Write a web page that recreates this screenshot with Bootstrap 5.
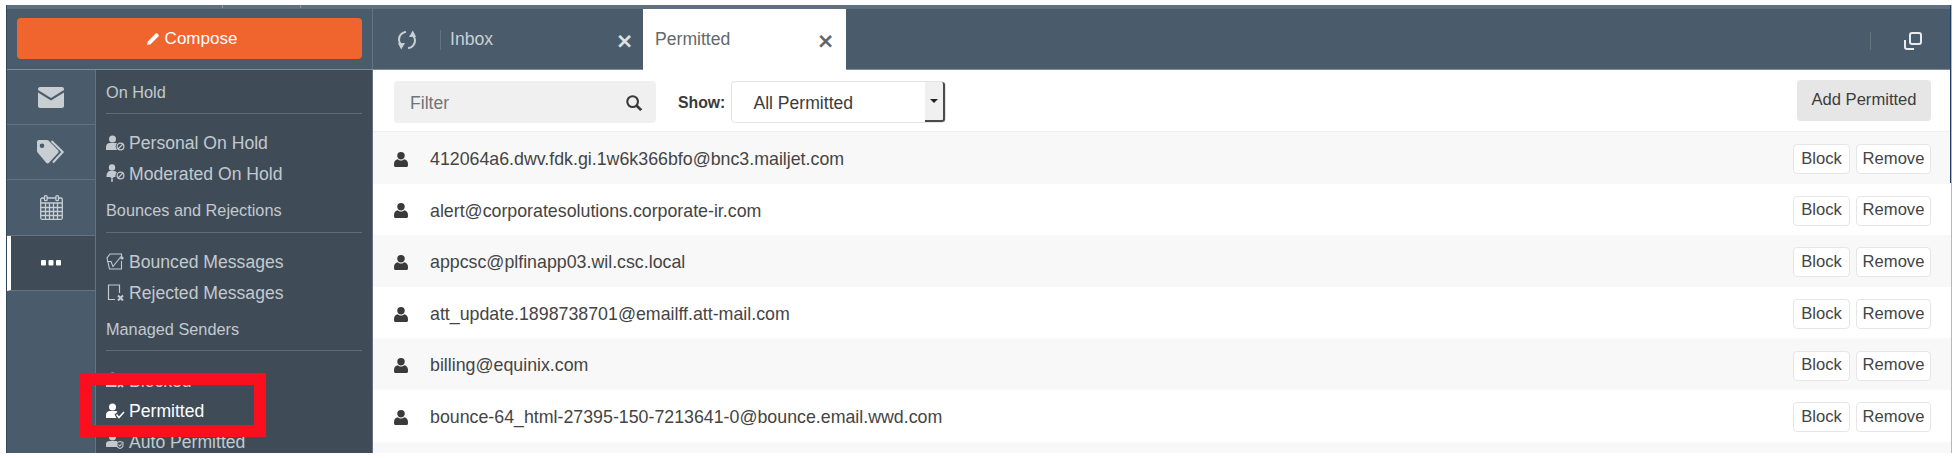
<!DOCTYPE html>
<html lang="en">
<head>
<meta charset="utf-8">
<title>Permitted</title>
<link href="https://cdn.jsdelivr.net/npm/bootstrap@5.3.0/dist/css/bootstrap.min.css" rel="stylesheet">
<style>
html,body{height:458px;overflow:hidden;background:#fff}
body{font-family:"Liberation Sans",Arial,sans-serif;color:#3c3c3c}
.frame{position:relative;margin:5px 6px 0 6px;width:1946px;height:448px;border-left:1px solid #33475f;border-right:1px solid #b5b8ba;overflow:hidden;display:flex;flex-direction:column;background:#fff}
.frame::after{content:"";position:absolute;right:-1px;top:0;width:2px;height:178px;background:#1f3a63;z-index:2}
.topstrip{height:4px;background:#5f7080;flex:none;display:flex}
.topnotch{width:1px;height:3px;background:#8b98a3}
.topnotch.one{margin-left:215px}
.topnotch.two{margin-left:77px}
.head{height:61px;flex:none;background:#4a5c6c;border-bottom:1px solid #7d8c98}
.composezone{width:366px;flex:none;padding:9px 10px 0 10px;border-right:1px solid #64747f}
.composebtn{display:flex;align-items:center;justify-content:center;gap:5px;width:345px;height:41px;background:#f0642e;border:0;border-radius:4px;color:#fff;font-size:17px;padding:0 0 0 4px}
.tabstrip{flex:1;display:flex;height:60px}
.tabitem{display:flex;position:relative;height:61px;color:#c9d0d5;font-size:17.6px}
.tab-inbox{width:270px;align-items:center;padding-left:24px}
.tab-perm{width:203px;background:#fff;color:#63696e;align-items:center;padding-left:12px;z-index:1}
.sepv{width:1px;height:20px;background:#64747f;margin:0 9px 0 23px}
.xmark{position:absolute;font-size:26px;font-weight:400;line-height:1;top:19px;-webkit-text-stroke:.6px currentColor}
.tab-inbox .xmark{left:244px;color:#dfe3e6}
.tab-perm .xmark{left:175px;color:#5f6468}
.popout{margin-left:auto;display:flex;align-items:center;padding:3px 28px 0 0}
.popout .sepv{margin:0 32px 0 0;height:18px}
.bodyrow{flex:1;display:flex;min-height:0;height:383px}
.railcol{width:89px;flex:none;background:#4a5c6c;border-right:1px solid #64747f}
.railitem{height:55.2px;display:flex;align-items:center;justify-content:center;border-bottom:1px solid #64747f}
.railitem.on{background:#3f4c58;border-left:4px solid #fff;padding-right:4px}
.panelcol{width:277px;flex:none;background:#3f4c58;padding:0 10px;border-right:1px solid #64747f;overflow:hidden}
.groupname{color:#c3c9ce;font-size:16.3px;line-height:18px;padding-top:12.500px;padding-bottom:12.500px;border-bottom:1px solid #5d6c78;margin-bottom:13.5px}
.menuline{display:flex;align-items:center;gap:4px;height:30.6px;color:#c3c9ce;font-size:17.6px;white-space:nowrap}
.menuline span{padding-top:1.500px}
.menuline.on{color:#fff}
.menuline.on span{padding-top:0}
.menuline svg{flex:none}
.maincol{flex:1;display:flex;flex-direction:column;min-width:0}
.toolzone{height:62px;flex:none;padding:11px 20px 0 21px;border-bottom:1px solid #efefef}
.filterbox{width:262px;height:42px;background:#f0f0f0;border-radius:4px;display:flex;align-items:center;justify-content:space-between;padding:2px 14px 0 16px;color:#70757a;font-size:17.6px}
.showlabel{font-weight:700;font-size:15.8px;line-height:44px;margin-left:22px;margin-right:6px;color:#3a3a3a}
.selectbox{width:215px;height:42px;border:1px solid #e4e4e4;border-radius:4px;display:flex;align-items:center;justify-content:space-between;padding-left:21px;font-size:17.6px;background:#fff;color:#3c3c3c}
.selectbox>span:first-child{padding-top:2px}
.selarrow{width:20px;height:40px;background:#f0f0f0;border-right:2px solid #4a4a4a;border-bottom:2px solid #4a4a4a;border-radius:0 3px 3px 0;display:flex;align-items:center;justify-content:center}
.selarrow::after{content:"";border:4px solid transparent;border-top:4px solid #222;border-bottom:0}
.addbtn{width:134px;height:41px;background:#e6e6e6;border:0;border-radius:4px;font-size:16.6px;color:#3c3c3c;padding:0;margin-top:-1px}
.senderline{height:51.6px;flex:none;display:flex;align-items:center;padding:3px 20px 0 21px;font-size:17.8px;color:#444}
.senderline:nth-child(odd){background:#f8f8f8}
.addr{margin-left:22px}
.minibtn{height:30px;background:#fff;border:1px solid #e6e6e6;border-radius:4px;font-size:16.6px;color:#444;padding:0}
.mb-block{width:57px;margin-left:auto}
.mb-remove{width:75px;margin-left:6px}
.redmark{position:absolute;left:73px;top:368px;width:186px;height:64px;border:12px solid #fb0f1e;pointer-events:none;z-index:3}
</style>
</head>
<body>
<div class="frame">
  <div class="topstrip"><span class="topnotch one"></span><span class="topnotch two"></span></div>
  <div class="head d-flex">
    <div class="composezone">
      <button class="composebtn" type="button">
        <svg width="14" height="14" viewBox="0 0 14 14"><path fill="#fff" d="M1 13l.8-3.6L9.600 1.600c.5-.5 1.200-.5 1.700 0l1.100 1.100c.5.5.5 1.200 0 1.700L4.600 12.200z"/></svg>
        Compose
      </button>
    </div>
    <div class="tabstrip">
      <div class="tabitem tab-inbox">
        <svg width="20" height="20" viewBox="0 0 18 18" fill="none" stroke="#c9d0d5" stroke-width="1.800"><path d="M8 1.500C4 2.300 1.500 5.500 1.800 9c.1 1.500.7 2.700 1.700 3.800"/><path d="M10 16.500c4-.8 6.500-4 6.200-7.500-.1-1.500-.7-2.700-1.700-3.800"/><path fill="#c9d0d5" stroke="none" d="M.8 12l6.400-.3-3.400 5.800zM17.200 6l-6.400.3 3.400-5.800z"/></svg>
        <span class="sepv"></span><span>Inbox</span><span class="xmark">×</span>
      </div>
      <div class="tabitem tab-perm"><span>Permitted</span><span class="xmark">×</span></div>
      <div class="popout">
        <span class="sepv"></span>
        <svg width="20" height="20" viewBox="0 0 20 20" fill="none" stroke="#e8ebed" stroke-width="2"><rect x="7" y="2" width="11" height="11" rx="2"/><path d="M2 9v7c0 1.200.8 2 2 2h7"/></svg>
      </div>
    </div>
  </div>
  <div class="bodyrow">
    <div class="railcol">
      <div class="railitem"><svg width="26" height="21" viewBox="0 0 26 21"><path fill="#c9ced2" d="M2 0h22c1.100 0 2 .9 2 2v1L13 11 0 3V2C0 .9.900 0 2 0zM0 5.500l13 8 13-8V19c0 1.100-.9 2-2 2H2c-1.100 0-2-.9-2-2z"/></svg></div>
      <div class="railitem"><svg width="28" height="24" viewBox="0 0 28 24"><path fill="#c9ced2" d="M0 2c0-1.100.9-2 2-2h8c.6 0 1.100.2 1.500.6L21 10.200c.8.800.8 2 0 2.800l-9 9.800c-.8.800-2 .8-2.800 0L.6 12.500C.2 12.100 0 11.600 0 11zm5 1.500a2.300 2.300 0 1 0 0 4.600 2.300 2.300 0 0 0 0-4.600z"/><path fill="none" stroke="#c9ced2" stroke-width="2" d="M14.500 1l11.200 11-9.700 10.500"/></svg></div>
      <div class="railitem"><svg width="23" height="25" viewBox="0 0 23 25" fill="none" stroke="#c9ced2" stroke-width="1.300"><rect x=".7" y="3" width="21.600" height="21.300" rx="1.500"/><path d="M.7 8h21.600M.7 12.500h21.600M.7 16.500h21.600M.7 20.500h21.600M5.500 8v16M9.500 8v16M13.500 8v16M17.500 8v16"/><rect x="4.500" y=".7" width="2.600" height="5" rx="1" fill="#4a5c6c"/><rect x="15.900" y=".7" width="2.600" height="5" rx="1" fill="#4a5c6c"/></svg></div>
      <div class="railitem on"><svg width="20" height="6" viewBox="0 0 20 6"><g fill="#fff"><rect width="5" height="5.500" rx="1"/><rect x="7.500" width="5" height="5.500" rx="1"/><rect x="15" width="5" height="5.500" rx="1"/></g></svg></div>
    </div>
    <div class="panelcol">
      <div class="groupname">On Hold</div>
      <div class="menuline">
        <svg width="19" height="16" viewBox="0 0 19 16"><g fill="#c3c9ce"><circle cx="6.500" cy="4" r="3.500"/><path d="M0 15v-3c0-2.500 2-4 3.500-4h6c1 0 1.500.3 1.500.3a5 5 0 0 0 .3 6.700z"/></g><g fill="none" stroke="#c3c9ce" stroke-width="1.200"><circle cx="14.500" cy="11.500" r="3.400"/><path d="M12 14l5-5"/></g></svg>
        <span>Personal On Hold</span></div>
      <div class="menuline">
        <svg width="19" height="18" viewBox="0 0 19 18"><g fill="#c3c9ce"><circle cx="6" cy="3.500" r="3.200"/><path d="M.5 12c0-3 1.500-5 3.500-5h4c1.500 0 2.500.8 2.800 1.500-1 1-1.500 2.500-1.300 4.500H7.500l-.5 1.500H5L4.500 13H.5z"/><rect x="5.200" y="15" width="1.600" height="2.800"/></g><g fill="none" stroke="#c3c9ce" stroke-width="1.200"><circle cx="14.500" cy="11.500" r="3.400"/><path d="M12 14l5-5"/></g></svg>
        <span>Moderated On Hold</span></div>
      <div class="groupname">Bounces and Rejections</div>
      <div class="menuline">
        <svg width="19" height="17" viewBox="0 0 19 17" fill="none" stroke="#c3c9ce" stroke-width="1.100"><path d="M15.500 4V1H4L1 5l2.500 11h12V8"/><path d="M1 8.500l4 0 2 5 8-10"/><circle cx="16" cy="5" r="1.600" fill="#c3c9ce" stroke="none"/></svg>
        <span>Bounced Messages</span></div>
      <div class="menuline">
        <svg width="19" height="17" viewBox="0 0 19 17" fill="none" stroke="#c3c9ce" stroke-width="1.200"><path d="M9 15.500H2.500V1h11v8"/><path stroke-width="2" d="M12 11.500l5 5M17 11.500l-5 5"/></svg>
        <span>Rejected Messages</span></div>
      <div class="groupname">Managed Senders</div>
      <div class="menuline">
        <svg width="19" height="16" viewBox="0 0 19 16"><g fill="#c3c9ce"><circle cx="6.500" cy="4" r="3.500"/><path d="M0 15v-4c0-2 1.500-3 3.500-3h7v7z"/></g><path stroke="#c3c9ce" stroke-width="2" d="M12 10l5 5M17 10l-5 5"/></svg>
        <span>Blocked</span></div>
      <div class="menuline on">
        <svg width="19" height="16" viewBox="0 0 19 16"><g fill="#fff"><circle cx="6.500" cy="4" r="3.500"/><path d="M0 15v-3c0-2.500 2-4 3.500-4h6c1 0 1.500.5 2 1l-3 2.500 2 3.500z"/></g><path fill="none" stroke="#fff" stroke-width="1.500" d="M10.500 11.500l2.500 3 5-5.500"/></svg>
        <span>Permitted</span></div>
      <div class="menuline">
        <svg width="19" height="16" viewBox="0 0 19 16"><g fill="#c3c9ce"><circle cx="6.500" cy="4" r="3.500"/><path d="M0 14v-3c0-2 1.500-3 3.500-3H11v6z"/></g><g fill="none" stroke="#c3c9ce" stroke-width="1.100"><path d="M11 9.500l3-1 3 1v3c0 1.500-1.500 2.500-3 3-1.500-.5-3-1.500-3-3z"/><path d="M12.500 11.500l1.300 1.500 2-2.300"/></g></svg>
        <span>Auto Permitted</span></div>
    </div>
    <div class="maincol">
      <div class="toolzone d-flex align-items-start">
        <div class="filterbox"><span>Filter</span>
          <svg width="16" height="16" viewBox="0 0 15 15" fill="none" stroke="#3a3a3a" stroke-width="2"><circle cx="6.200" cy="6.200" r="5"/><path stroke-width="2.500" d="M9.800 9.800l4.400 4.400"/></svg></div>
        <span class="showlabel">Show:</span>
        <div class="selectbox"><span>All Permitted</span><span class="selarrow"></span></div>
        <button class="addbtn ms-auto" type="button">Add Permitted</button>
      </div>
      <div class="d-flex flex-column">
        <div class="senderline"><svg width="14" height="15" viewBox="0 0 13 14"><path fill="#3a3a3a" d="M6.500 0a3.500 3.500 0 0 1 3.500 3.500C10 5.500 8.500 7 6.500 7S3 5.500 3 3.500A3.500 3.500 0 0 1 6.500 0zM0 11c0-2.500 1.500-4 3.500-4.300C4.300 7.500 5.300 8 6.500 8s2.200-.5 3-1.300C11.500 7 13 8.500 13 11v1.500c0 .8-.7 1.500-1.500 1.500h-10C.7 14 0 13.300 0 12.500z"/></svg><span class="addr">412064a6.dwv.fdk.gi.1w6k366bfo@bnc3.mailjet.com</span><button class="minibtn mb-block" type="button">Block</button><button class="minibtn mb-remove" type="button">Remove</button></div>
        <div class="senderline"><svg width="14" height="15" viewBox="0 0 13 14"><path fill="#3a3a3a" d="M6.500 0a3.500 3.500 0 0 1 3.500 3.500C10 5.500 8.500 7 6.500 7S3 5.500 3 3.500A3.500 3.500 0 0 1 6.500 0zM0 11c0-2.500 1.500-4 3.500-4.300C4.300 7.500 5.300 8 6.500 8s2.200-.5 3-1.300C11.500 7 13 8.500 13 11v1.500c0 .8-.7 1.500-1.500 1.500h-10C.7 14 0 13.300 0 12.500z"/></svg><span class="addr">alert@corporatesolutions.corporate-ir.com</span><button class="minibtn mb-block" type="button">Block</button><button class="minibtn mb-remove" type="button">Remove</button></div>
        <div class="senderline"><svg width="14" height="15" viewBox="0 0 13 14"><path fill="#3a3a3a" d="M6.500 0a3.500 3.500 0 0 1 3.500 3.500C10 5.500 8.500 7 6.500 7S3 5.500 3 3.500A3.500 3.500 0 0 1 6.500 0zM0 11c0-2.500 1.500-4 3.500-4.300C4.300 7.500 5.300 8 6.500 8s2.200-.5 3-1.300C11.500 7 13 8.500 13 11v1.500c0 .8-.7 1.500-1.500 1.500h-10C.7 14 0 13.300 0 12.500z"/></svg><span class="addr">appcsc@plfinapp03.wil.csc.local</span><button class="minibtn mb-block" type="button">Block</button><button class="minibtn mb-remove" type="button">Remove</button></div>
        <div class="senderline"><svg width="14" height="15" viewBox="0 0 13 14"><path fill="#3a3a3a" d="M6.500 0a3.500 3.500 0 0 1 3.500 3.500C10 5.500 8.500 7 6.500 7S3 5.500 3 3.500A3.500 3.500 0 0 1 6.500 0zM0 11c0-2.500 1.500-4 3.500-4.300C4.300 7.500 5.300 8 6.500 8s2.200-.5 3-1.300C11.500 7 13 8.500 13 11v1.500c0 .8-.7 1.500-1.500 1.500h-10C.7 14 0 13.300 0 12.500z"/></svg><span class="addr">att_update.1898738701@emailff.att-mail.com</span><button class="minibtn mb-block" type="button">Block</button><button class="minibtn mb-remove" type="button">Remove</button></div>
        <div class="senderline"><svg width="14" height="15" viewBox="0 0 13 14"><path fill="#3a3a3a" d="M6.500 0a3.500 3.500 0 0 1 3.500 3.500C10 5.500 8.500 7 6.500 7S3 5.500 3 3.500A3.500 3.500 0 0 1 6.500 0zM0 11c0-2.500 1.500-4 3.500-4.300C4.300 7.500 5.300 8 6.500 8s2.200-.5 3-1.300C11.500 7 13 8.500 13 11v1.500c0 .8-.7 1.500-1.500 1.500h-10C.7 14 0 13.300 0 12.500z"/></svg><span class="addr">billing@equinix.com</span><button class="minibtn mb-block" type="button">Block</button><button class="minibtn mb-remove" type="button">Remove</button></div>
        <div class="senderline"><svg width="14" height="15" viewBox="0 0 13 14"><path fill="#3a3a3a" d="M6.500 0a3.500 3.500 0 0 1 3.500 3.500C10 5.500 8.500 7 6.500 7S3 5.500 3 3.500A3.500 3.500 0 0 1 6.500 0zM0 11c0-2.500 1.500-4 3.500-4.300C4.300 7.500 5.300 8 6.500 8s2.200-.5 3-1.300C11.500 7 13 8.500 13 11v1.500c0 .8-.7 1.500-1.500 1.500h-10C.7 14 0 13.300 0 12.500z"/></svg><span class="addr">bounce-64_html-27395-150-7213641-0@bounce.email.wwd.com</span><button class="minibtn mb-block" type="button">Block</button><button class="minibtn mb-remove" type="button">Remove</button></div>
        <div class="senderline"></div>
      </div>
    </div>
  </div>
  <div class="redmark"></div>
</div>
<script src="https://cdn.jsdelivr.net/npm/bootstrap@5.3.0/dist/js/bootstrap.bundle.min.js"></script>
</body>
</html>
